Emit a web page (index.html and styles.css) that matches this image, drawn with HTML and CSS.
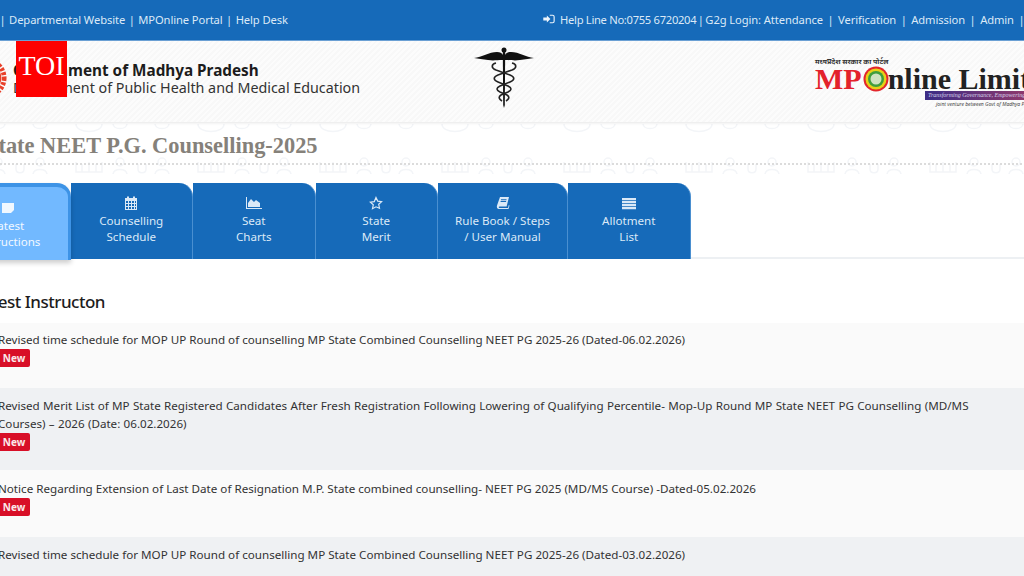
FILE: index.html
```html
<!DOCTYPE html>
<html lang="en">
<head>
<meta charset="utf-8">
<title>State NEET P.G. Counselling-2025</title>
<link rel="stylesheet" href="styles.css">
</head>
<body>
<div class="page">
  <div class="topbar">
    <div class="links">
      <span>|</span><a>Departmental Website</a><span>|</span><a>MPOnline Portal</a><span>|</span><a>Help Desk</a>
    </div>
    <div class="links">
      <svg class="signin" viewBox="0 0 16 14"><path d="M0 5h5V2l5 5-5 5V9H0z"/><path d="M9 1h4a3 3 0 0 1 3 3v6a3 3 0 0 1-3 3H9v-1.6h4a1.4 1.4 0 0 0 1.4-1.4V4A1.4 1.4 0 0 0 13 2.600H9z"/></svg>
      <a class="help">Help Line No:0755 6720204</a><span class="tight">|</span><a>G2g Login: Attendance</a><span class="wide">|</span><a>Verification</a><span class="wide">|</span><a>Admission</a><span class="wide">|</span><a>Admin</a><span class="wide">|</span>
    </div>
  </div>
  <header class="header">
    <div class="brand">
      <svg class="emblem" viewBox="0 0 44 44"><circle cx="22" cy="22" r="19" fill="none" stroke="#e8402a" stroke-width="5" stroke-dasharray="3 1.500"/><circle cx="22" cy="22" r="16" fill="#e8402a"/><circle cx="22" cy="22" r="13.500" fill="#e2c31c"/><circle cx="22" cy="22" r="10" fill="#6fae3a"/></svg>
      <div class="brand-text">
        <div class="gov">Government of Madhya Pradesh</div>
        <div class="dept">Department of Public Health and Medical Education</div>
      </div>
    </div>
    <svg class="caduceus" viewBox="0 0 60 62">
      <path d="M0 11c8-1 15-6 23-6 3 0 5 1 6 3v5c-7 0-9 1-15 0-5-1-10-1-14-2z" fill="#111"/>
      <path d="M60 11c-8-1-15-6-23-6-3 0-5 1-6 3v5c7 0 9 1 15 0 5-1 10-1 14-2z" fill="#111"/>
      <circle cx="30" cy="3" r="2.500" fill="#111"/>
      <path d="M28.800 4h2.400l-.4 54-.8 3-.8-3z" fill="#111"/>
      <path d="M22 16c-5 1-5 5 0 7l14 5c5 2 5 5 0 7l-10 4c-4 2-4 4 0 6l7 3c3 2 2 4-1 6" fill="none" stroke="#222" stroke-width="1.600"/>
      <path d="M38 16c5 1 5 5 0 7l-14 5c-5 2-5 5 0 7l10 4c4 2 4 4 0 6l-7 3c-3 2-2 4 1 6" fill="none" stroke="#222" stroke-width="1.600"/>
    </svg>
    <div class="mplogo">
      <div class="mp-hindi">मध्यप्रदेश सरकार का पोर्टल</div>
      <div class="mp-name"><span class="mp-red">MP</span><svg class="mp-o" viewBox="0 0 26 26"><circle cx="13" cy="13" r="12.500" fill="#e3262c"/><circle cx="13" cy="13" r="10.500" fill="#e6d117"/><circle cx="13" cy="13" r="8" fill="#3f9e3c"/><circle cx="13" cy="13" r="5.500" fill="#cfe3c0"/></svg><span>nline Limited</span></div>
      <div class="mp-strip">Transforming Governance, Empowering Citizens</div>
      <div class="mp-joint">joint venture between Govt of Madhya Pradesh</div>
    </div>
  </header>
  <div class="titlebar">
    <h1 class="title">State NEET P.G. Counselling-2025</h1>
  </div>
  <nav class="tabs">
    <a class="tab active">
      <svg class="ico" viewBox="0 0 14 14"><path d="M1 2h12v7l-3 3H1z"/></svg>
      <span>Latest<br>Instructions</span>
    </a>
    <a class="tab">
      <svg class="ico" viewBox="0 0 14 14"><path fill-rule="evenodd" d="M1 2h2V0.500h2V2h4V0.500h2V2h2v12H1zM2 5v2h2V5zm3 0v2h2V5zm3 0v2h2V5zm3 0v2h1V5zM2 8v2h2V8zm3 0v2h2V8zm3 0v2h2V8zm3 0v2h1V8zM2 11v2h2v-2zm3 0v2h2v-2zm3 0v2h2v-2zm3 0v2h1v-2z"/></svg>
      <span>Counselling<br>Schedule</span>
    </a>
    <a class="tab">
      <svg class="ico wide" viewBox="0 0 16 14"><path d="M0 1h1v11h15v1H0z"/><path d="M2 11V7l3-4 3 3 2-2 4 3v4z"/></svg>
      <span>Seat<br>Charts</span>
    </a>
    <a class="tab">
      <svg class="ico" viewBox="0 0 14 14"><path d="M7 1.500l1.700 3.600 3.900.5-2.900 2.700.8 3.900L7 10.800l-3.500 1.900.8-3.900-2.900-2.700 3.900-.5z" fill="none" stroke="currentColor" stroke-width="1.200"/></svg>
      <span>State<br>Merit</span>
    </a>
    <a class="tab rule">
      <svg class="ico" viewBox="0 0 14 14"><path d="M4 1h9l-2.400 9.500H3.500c-1 0-1 1.500 0 1.500H12l.8-3 .7.500L12.500 13H3c-2 0-2.500-2-2-3.500zM5 3.200v1h5.500v-1zM4.600 5v1h5.500V5z" fill-rule="evenodd"/></svg>
      <span>Rule Book / Steps<br>/ User Manual</span>
    </a>
    <a class="tab">
      <svg class="ico" viewBox="0 0 14 14"><path d="M0 2h14v2.200H0zM0 5h14v2.200H0zM0 8h14v2.200H0zM0 11h14v2.200H0z"/></svg>
      <span>Allotment<br>List</span>
    </a>
  </nav>
  <main class="content">
    <h2 class="section">Latest Instructon</h2>
    <ul class="list">
      <li class="row">
        <p>Revised time schedule for MOP UP Round of counselling MP State Combined Counselling NEET PG 2025-26 (Dated-06.02.2026)</p>
        <b class="badge">New</b>
      </li>
      <li class="row alt">
        <p class="long">Revised Merit List of MP State Registered Candidates After Fresh Registration Following Lowering of Qualifying Percentile- Mop-Up Round MP State NEET PG Counselling (MD/MS Courses) – 2026 (Date: 06.02.2026)</p>
        <b class="badge">New</b>
      </li>
      <li class="row">
        <p>Notice Regarding Extension of Last Date of Resignation M.P. State combined counselling- NEET PG 2025 (MD/MS Course) -Dated-05.02.2026</p>
        <b class="badge">New</b>
      </li>
      <li class="row alt">
        <p>Revised time schedule for MOP UP Round of counselling MP State Combined Counselling NEET PG 2025-26 (Dated-03.02.2026)</p>
      </li>
    </ul>
  </main>
</div>
<div class="toi">TOI</div>
</body>
</html>
```
FILE: styles.css
```css
* { box-sizing: border-box; }
html, body { margin: 0; height: 576px; overflow: hidden; background: #fff; }
body { font-family: "Noto Sans", "Open Sans", sans-serif; color: #333; }
.page { width: 1110px; margin-left: -52px; }

.topbar {
  height: 41px;
  background: #166ab9;
  border-bottom: 1px solid #6da3d8;
  color: #dbe9f7;
  font-size: 11.200px;
  letter-spacing: -.1px;
  display: flex;
  justify-content: space-between;
  align-items: center;
  padding: 0 35px 2px 54px;
}
.links { display: flex; align-items: center; gap: 6px; }
.links span { margin: 0 -2.500px; }
.links .wide { margin: 0 -1.500px; }
.links .tight { margin: 0 -4.500px; }
.help { letter-spacing: -.3px; }
.signin { width: 12px; height: 10px; fill: #eef5fc; margin-right: -1px; }

.header {
  height: 81px;
  display: flex;
  align-items: flex-start;
  background: repeating-linear-gradient(135deg, #fcfcfc 0 2px, #f8f8f8 2px 4px);
  box-shadow: 0 1px 3px rgba(0,0,0,.1);
  position: relative;
}
.brand { display: flex; flex: none; width: 526px; padding: 20px 0 0 17px; gap: 6px; }
.emblem { width: 42px; height: 42px; flex: none; margin-top: -4px; }
.brand-text { line-height: 18px; }
.gov { font-size: 15.300px; font-weight: 700; color: #1c1c1c; white-space: nowrap; }
.dept { font-size: 14.300px; color: #333; white-space: nowrap; }
.caduceus { width: 60px; height: 62px; margin-top: 6px; flex: none; }
.mplogo { flex: none; margin-left: 281px; padding-top: 17px; font-family: "Liberation Serif", serif; white-space: nowrap; }
.mp-hindi { font: 700 7px/8px "Noto Sans", "DejaVu Sans", sans-serif; color: #333; }
.mp-name { display: flex; align-items: center; font-size: 30px; line-height: 24px; font-weight: 700; color: #222; letter-spacing: 0; }
.mp-red { color: #e3222b; margin-right: 1px; }
.mp-o { width: 26px; height: 26px; margin: 0 -1px 0 0; }
.mp-strip { margin: -1px 0 0 110px; height: 9px; font: italic 6px/9px "Liberation Serif", serif; color: #d9d3ea; background: linear-gradient(90deg, #3b2d86, #a03a66); padding-left: 3px; width: 122px; overflow: hidden; }
.mp-joint { margin-left: 121px; font: italic 5px/8px "Noto Sans", sans-serif; color: #444; }

.titlebar {
  height: 61px;
  padding-top: 10px;
  background-image: url("data:image/svg+xml,%3Csvg xmlns='http://www.w3.org/2000/svg' width='122' height='60'%3E%3Cg fill='none' stroke='%23f3f5f8' stroke-width='1.500'%3E%3Cpath d='M6 40v10h26V40M12 42v8M19 40v10M26 42v8'/%3E%3Ccircle cx='50' cy='40' r='4'/%3E%3Cpath d='M43 52c1-6 13-6 14 0'/%3E%3Cpath d='M68 42v5c0 5 8 5 8 0v-5'/%3E%3Ccircle cx='92' cy='40' r='4'/%3E%3Cpath d='M85 52c1-6 13-6 14 0'/%3E%3Cpath d='M6 2c0 10 26 10 26 0M43 2c1 6 13 6 14 0M85 2c1 6 13 6 14 0'/%3E%3C/g%3E%3C/svg%3E");
}
.title {
  margin: 0;
  padding-left: 38px;
  height: 33px;
  font: 700 22.400px/28px "Liberation Serif", serif;
  color: #85817a;
  white-space: nowrap;
  border-bottom: 2px dotted #dcdcdc;
}

.tabs { display: flex; height: 76px; border-bottom: 2px solid #edf0f3; }
.tab {
  width: 122.500px;
  height: 76px;
  background: #166ab9;
  color: #dbe9f7;
  border-radius: 0 14px 0 0;
  border-right: 1px solid #4a8fd0;
  font-size: 11.600px;
  line-height: 16px;
  text-align: center;
  display: flex;
  flex-direction: column;
  align-items: center;
  padding-top: 13px;
  gap: 3px;
}
.tab.rule { width: 130px; }
.tab.active {
  background: #72b9ff;
  color: #f1f8ff;
  border-top: 4px solid #3d93e6;
  border-right: 3px solid #3d93e6;
  height: 77px;
  padding-top: 14px;
  box-shadow: 0 3px 5px rgba(0,0,0,.2);
  position: relative;
}
.ico { width: 14px; height: 14px; fill: currentColor; flex: none; }
.ico.wide { width: 16px; }

.content { padding-top: 31px; }
.section { margin: 0; padding-left: 26px; font-size: 17px; letter-spacing: -.5px; line-height: 24px; font-weight: 500; color: #1d1d1d; }
.list { list-style: none; margin: 9px 0 0; padding: 0; }
.row { background: #fafafa; padding: 9px 0 21px 50px; }
.row:first-child { padding-top: 8px; }
.row:nth-child(3) { padding-top: 10px; }
.row.alt { background: #eff1f3; padding-bottom: 19px; }
.row p { margin: 0; font-size: 11.640px; line-height: 18px; color: #333; width: 1000px; }
.row p.long { word-spacing: .3px; }
.badge {
  display: block;
  width: 32px;
  height: 18px;
  background: #d80f27;
  color: #fbe9ea;
  border-radius: 2px;
  font-size: 10px;
  line-height: 18px;
  font-weight: 700;
  text-align: center;
}

.toi {
  position: absolute;
  left: 16px;
  top: 41px;
  width: 51px;
  height: 56px;
  background: #fe0000;
  color: #fff;
  font: 400 28px/50px "Liberation Serif", serif;
  text-align: center;
}
```
